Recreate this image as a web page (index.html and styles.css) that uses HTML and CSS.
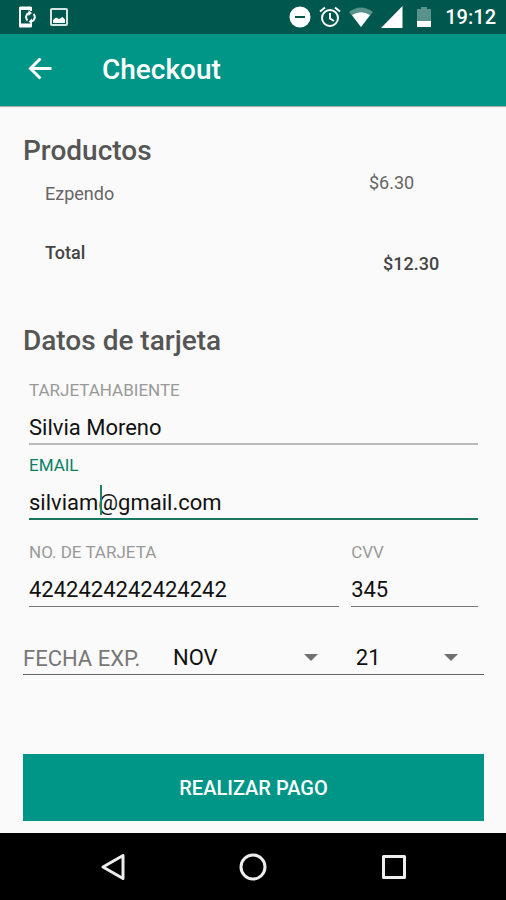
FILE: index.html
```html
<!DOCTYPE html>
<html lang="es">
<head>
  <meta charset="UTF-8">
  <meta name="viewport" content="width=device-width, initial-scale=1.0">
  <title>Checkout</title>
  <link rel="stylesheet" href="styles.css">
</head>
<body>
  <div class="status-bar">
    <div class="status-left">
      <svg width="18" height="24" viewBox="0 0 18 24">
        <path d="M13 6V3H2V21H13V18.500" fill="none" stroke="#fff" stroke-width="2" stroke-linejoin="round"/>
        <path d="M2.500 1.500h10q1.500 0 1.500 1.500v2H1V3q0-1.500 1.500-1.500zM1 18.500h13V21q0 1.500-1.500 1.500h-10Q1 22.500 1 21z" fill="#fff"/>
        <path d="M9.500 15.500a4.500 4.500 0 0 1 1.500-7.500M15.500 9a4.500 4.500 0 0 1-2 7.500" fill="none" stroke="#fff" stroke-width="2"/>
        <path d="M10.500 5l3.500 3-3.500 3zM14 13.500l-3.500 3 3.500 2.500z" fill="#fff"/>
      </svg>
      <svg width="18" height="18" viewBox="0 0 18 18">
        <rect x="1" y="1" width="16" height="16" rx="1" fill="none" stroke="#d5e5e3" stroke-width="2"/>
        <path d="M3 15v-3l3-2.500 3 1.500 3.500-2 2.500 2.500V15z" fill="#fff"/>
      </svg>
    </div>
    <div class="status-right">
      <svg width="22" height="22" viewBox="0 0 22 22">
        <circle cx="11" cy="11" r="10.500" fill="#fff"/>
        <path d="M6 11h10" stroke="#00574e" stroke-width="2"/>
      </svg>
      <svg width="22" height="22" viewBox="0 0 22 22" fill="none" stroke="#fff" stroke-width="2">
        <circle cx="11" cy="12" r="8"/>
        <path d="M11 7v5.500l4 2.500M1 5.500l5-4M21 5.500l-5-4"/>
      </svg>
      <svg width="24" height="22" viewBox="0 0 24 22">
        <path d="M0 6Q12-3 24 6L12 21z" fill="#fff" opacity=".35"/>
        <path d="M3 9Q12 3.500 21 9L12 21z" fill="#fff"/>
      </svg>
      <svg width="22" height="22" viewBox="0 0 22 22">
        <path d="M21.500 0v22H0z" fill="#fff"/>
      </svg>
      <svg class="battery" width="14" height="22" viewBox="0 0 14 22">
        <path d="M0 3h4V1h6v2h4v12H0z" fill="#fff" opacity=".35"/>
        <path d="M0 15h14v6H0z" fill="#fff"/>
      </svg>
      <span class="clock">19:12</span>
    </div>
  </div>

  <header class="app-bar">
    <a href="#" class="back" aria-label="Volver">
      <svg width="24" height="24" viewBox="0 0 24 24" fill="none" stroke="#fff" stroke-width="3">
        <path d="M12.500 .500L2.500 10.500l10 10M2.500 10.500H23.500"/>
      </svg>
    </a>
    <h1>Checkout</h1>
  </header>

  <main>
    <h2>Productos</h2>
    <div class="item">
      <span class="item-name">Ezpendo</span>
      <span class="item-price">$6.30</span>
    </div>
    <div class="item total">
      <span class="item-name">Total</span>
      <span class="item-price">$12.30</span>
    </div>

    <h2>Datos de tarjeta</h2>
    <form>
      <div class="fields">
        <div class="field name-field">
          <label for="holder">TARJETAHABIENTE</label>
          <input type="text" id="holder" value="Silvia Moreno">
        </div>
        <div class="field active">
          <label for="email">EMAIL</label>
          <input type="text" id="email" value="silviam@gmail.com">
          <span class="caret"></span>
        </div>
        <div class="field-row">
          <div class="field">
            <label for="card">NO. DE TARJETA</label>
            <input type="text" id="card" value="4242424242424242">
          </div>
          <div class="field">
            <label for="cvv">CVV</label>
            <input type="text" id="cvv" value="345">
          </div>
        </div>
      </div>
      <div class="expiry">
        <label for="month">FECHA EXP.</label>
        <div class="spinner">
          <select id="month">
            <option>NOV</option>
            <option>DIC</option>
          </select>
        </div>
        <div class="spinner">
          <select id="year" aria-label="Año">
            <option>21</option>
            <option>22</option>
          </select>
        </div>
      </div>
      <button type="button" class="pay">REALIZAR PAGO</button>
    </form>
  </main>

  <nav class="nav-bar">
    <button type="button" aria-label="Atrás">
      <svg width="28" height="28" viewBox="0 0 28 28" fill="none" stroke="#eee" stroke-width="3" stroke-linejoin="round">
        <path d="M24 2.500v23L4 14z"/>
      </svg>
    </button>
    <button type="button" aria-label="Inicio">
      <svg width="28" height="28" viewBox="0 0 28 28" fill="none" stroke="#eee" stroke-width="3">
        <circle cx="14" cy="14" r="12"/>
      </svg>
    </button>
    <button type="button" aria-label="Recientes">
      <svg width="28" height="28" viewBox="0 0 28 28" fill="none" stroke="#eee" stroke-width="3" stroke-linejoin="round">
        <rect x="3.500" y="3.500" width="21" height="21"/>
      </svg>
    </button>
  </nav>
</body>
</html>
```
FILE: styles.css
```css
* {
  box-sizing: border-box;
}
body {
  margin: 0;
  min-height: 100vh;
  display: flex;
  flex-direction: column;
  font-family: Roboto, sans-serif;
  background: #fafafa;
  color: #111;
}
svg {
  display: block;
}
h1, h2 {
  margin: 0;
  font-size: 28px;
  font-weight: 500;
  line-height: 34px;
}
.status-bar {
  height: 34px;
  padding: 0 10px 0 18px;
  display: flex;
  align-items: center;
  justify-content: space-between;
  background: #00574e;
  color: #fff;
}
.status-left {
  display: flex;
  align-items: center;
  gap: 14px;
}
.status-right {
  display: flex;
  align-items: center;
  gap: 8px;
}
.battery {
  margin-left: 6px;
}
.clock {
  margin-left: 6px;
  font-size: 20px;
  font-weight: 500;
  line-height: 36px;
}
.app-bar {
  height: 72px;
  padding: 0 28px;
  display: flex;
  align-items: center;
  gap: 50px;
  background: #009687;
  color: #fff;
  box-shadow: 0 1px 1px rgba(0, 0, 0, 0.3);
}
main {
  flex: 1;
  padding: 28px 22px 12px 23px;
}
h2 {
  color: #555;
}
.item {
  display: flex;
  height: 33px;
  margin-top: 4px;
  padding-left: 22px;
  font-size: 18px;
  line-height: 22px;
  color: #666;
}
.item-name {
  flex: 1;
  align-self: flex-end;
}
.item-price {
  width: 115px;
}
.total {
  margin-top: 37px;
  margin-bottom: 49px;
  font-weight: 500;
  color: #444;
}
.total .item-name {
  align-self: flex-start;
}
.total .item-price {
  width: 101px;
  align-self: flex-end;
}
.fields {
  margin-top: 21px;
  padding: 0 6px;
}
.field {
  position: relative;
  display: flex;
  flex-direction: column;
  flex: 1;
}
.field label {
  font-size: 17px;
  line-height: 22px;
  color: #999;
}
.field input {
  width: 100%;
  height: 44px;
  padding: 10px 0 0;
  border: none;
  border-bottom: 1px solid #777;
  outline: none;
  background: transparent;
  font-family: inherit;
  font-size: 22px;
  color: #111;
}
.name-field input {
  border-bottom: 2px solid #bbb;
}
.active {
  margin-top: 9px;
}
.active label {
  color: #0b8063;
}
.active input {
  border-bottom: 2px solid #1c7560;
}
/* text cursor over the email input */
.caret {
  position: absolute;
  left: 71px;
  bottom: 5px;
  width: 2px;
  height: 30px;
  background: #1c8569;
}
.field-row {
  display: flex;
  gap: 12px;
  margin-top: 21px;
}
.field-row .field:first-child {
  flex: 22;
}
.field-row .field:last-child {
  flex: 9;
}
.expiry {
  display: flex;
  gap: 12px;
  height: 38px;
  margin-top: 30px;
  border-bottom: 1px solid #666;
}
.expiry label {
  width: 138px;
  font-size: 22px;
  line-height: 44px;
  white-space: nowrap;
  color: #777;
}
.spinner {
  position: relative;
  flex: 4;
}
.spinner:last-child {
  flex: 3;
}
.spinner select {
  width: 100%;
  height: 37px;
  padding: 4px 0 0;
  border: none;
  outline: none;
  appearance: none;
  background: transparent;
  font-family: inherit;
  font-size: 22px;
  color: #111;
}
.spinner::after {
  content: '';
  position: absolute;
  right: 26px;
  top: 17px;
  border: 7px solid transparent;
  border-top-color: #707070;
  border-bottom: none;
  pointer-events: none;
}
.pay {
  display: block;
  width: 100%;
  height: 67px;
  margin-top: 79px;
  border: none;
  background: #009687;
  color: #fff;
  font-family: inherit;
  font-size: 20px;
  font-weight: 500;
  cursor: pointer;
}
.nav-bar {
  height: 67px;
  padding: 0 42px 0 43px;
  display: flex;
  background: #000;
}
.nav-bar button {
  flex: 1;
  display: flex;
  align-items: center;
  justify-content: center;
  padding: 0;
  border: none;
  background: transparent;
}
```
